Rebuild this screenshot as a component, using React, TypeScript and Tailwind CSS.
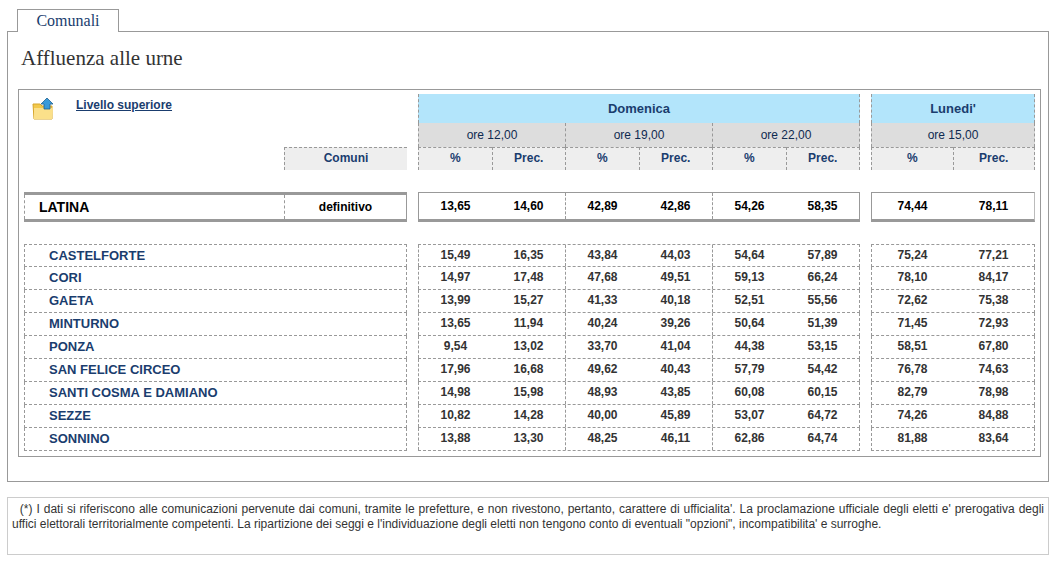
import React from "react";

const rows: [string, string[]][] = [
  ["CASTELFORTE", ["15,49", "16,35", "43,84", "44,03", "54,64", "57,89", "75,24", "77,21"]],
  ["CORI", ["14,97", "17,48", "47,68", "49,51", "59,13", "66,24", "78,10", "84,17"]],
  ["GAETA", ["13,99", "15,27", "41,33", "40,18", "52,51", "55,56", "72,62", "75,38"]],
  ["MINTURNO", ["13,65", "11,94", "40,24", "39,26", "50,64", "51,39", "71,45", "72,93"]],
  ["PONZA", ["9,54", "13,02", "33,70", "41,04", "44,38", "53,15", "58,51", "67,80"]],
  ["SAN FELICE CIRCEO", ["17,96", "16,68", "49,62", "40,43", "57,79", "54,42", "76,78", "74,63"]],
  ["SANTI COSMA E DAMIANO", ["14,98", "15,98", "48,93", "43,85", "60,08", "60,15", "82,79", "78,98"]],
  ["SEZZE", ["10,82", "14,28", "40,00", "45,89", "53,07", "64,72", "74,26", "84,88"]],
  ["SONNINO", ["13,88", "13,30", "48,25", "46,11", "62,86", "64,74", "81,88", "83,64"]],
];

const f = { fontFamily: '"Liberation Sans", Arial, sans-serif' };

export default function App() {
  return (
    <div className="w-[1056px] h-[563px] bg-white relative" style={f}>
      <div className="pt-[9px] pl-[17px]">
        <div className="w-[102px] h-[23px] border border-b-0 border-[#999] bg-white text-center text-[16px] text-[#1a3d6e] leading-[22px] relative z-10 -mb-px" style={{ fontFamily: '"Liberation Serif", serif' }}>
          Comunali
        </div>
      </div>
      <div className="mx-[7px] w-[1042px] h-[451px] border border-[#999] pt-[13px] px-[10px]">
        <div className="text-[21px] text-[#333] ml-[3px] leading-[26px]" style={{ fontFamily: '"Liberation Serif", serif' }}>
          Affluenza alle urne
        </div>
        <div className="mt-[18px] w-[1023px] h-[368px] border border-[#999] pl-[5px] pt-[4px] text-[12px] font-bold">
          <div className="flex">
            <div className="w-[383px] flex flex-col">
              <div className="flex items-start h-[53px]">
                <svg width="26" height="26" viewBox="0 0 26 26" className="ml-[7px] mt-[2px]">
                  <path d="M2 8h7l2 2h10v13H3z" fill="#f2c84b" stroke="#d6a52a" />
                  <path d="M3 12h19l-1 11H3z" fill="#fbe08a" />
                  <path d="M16 2l6 6h-3v5h-6V8h-3z" fill="#3a9ad9" stroke="#1e5f8e" strokeWidth="0.8" />
                </svg>
                <a className="ml-[19px] mt-[2px] text-[#1a3d6e] underline text-[12px]">Livello superiore</a>
              </div>
              <div className="flex h-[23px]">
                <div className="w-[260px]" />
                <div className="w-[123px] bg-[#eee] border-l border-t border-dashed border-[#999] text-center leading-[21px] text-[#1a3d6e]">Comuni</div>
              </div>
            </div>
            <div className="w-[11px]" />
            <div className="w-[442px] flex flex-col text-[#1a3d6e]">
              <div className="h-[29px] bg-[#b3e5fb] leading-[29px] text-center text-[13px] border-l border-r border-dashed border-[#999]">Domenica</div>
              <div className="h-[24px] bg-[#ddd] flex font-normal text-[12px] leading-[24px] text-[#0f2a50]">
                {["ore 12,00", "ore 19,00", "ore 22,00"].map((o, i) => (
                  <div key={o} className={"flex-1 text-center border-dashed border-[#999] border-l " + (i === 2 ? "border-r" : "")}>{o}</div>
                ))}
              </div>
              <div className="h-[23px] bg-[#eee] flex leading-[21px]">
                {[0, 1, 2, 3, 4, 5].map((i) => (
                  <div key={i} className={"flex-1 text-center border-dashed border-[#999] border-t border-l " + (i === 5 ? "border-r" : "")}>{i % 2 ? "Prec." : "%"}</div>
                ))}
              </div>
            </div>
            <div className="w-[11px]" />
            <div className="w-[164px] flex flex-col text-[#1a3d6e]">
              <div className="h-[29px] bg-[#b3e5fb] leading-[29px] text-center text-[13px] border-l border-r border-dashed border-[#999]">Lunedi'</div>
              <div className="h-[24px] bg-[#ddd] font-normal text-center leading-[24px] border-l border-r border-dashed border-[#999] text-[#0f2a50]">ore 15,00</div>
              <div className="h-[23px] bg-[#eee] flex leading-[21px]">
                <div className="flex-1 text-center border-dashed border-[#999] border-t border-l">%</div>
                <div className="flex-1 text-center border-dashed border-[#999] border-t border-l border-r">Prec.</div>
              </div>
            </div>
          </div>
          <div className="flex mt-[22px] h-[30px] text-black">
            <div className="w-[383px] flex border-y-[3px] border-[#999] border-r border-r-[#999]">
              <div className="w-[260px] border-l border-dashed border-[#999] pl-[14px] text-[14px] leading-[24px]">LATINA</div>
              <div className="w-[122px] border-l border-dashed border-[#999] text-center leading-[24px]">definitivo</div>
            </div>
            <div className="w-[11px]" />
            <div className="w-[442px] flex border-t border-b-[3px] border-[#999] border-l border-r leading-[27px] text-[12px]">
              {[0, 1, 2].map((g) => (
                <div key={g} className={"flex-1 flex " + (g > 0 ? "border-l border-dashed border-[#999]" : "")}>
                  <div className="flex-1 text-center">{["13,65", "42,89", "54,26"][g]}</div>
                  <div className="flex-1 text-center">{["14,60", "42,86", "58,35"][g]}</div>
                </div>
              ))}
            </div>
            <div className="w-[11px]" />
            <div className="w-[164px] flex border-t border-b-[3px] border-[#999] border-l border-r border-r-[#bbb] leading-[27px]">
              <div className="flex-1 text-center">74,44</div>
              <div className="flex-1 text-center">78,11</div>
            </div>
          </div>
          <div className="mt-[22px] text-[#333]">
            {rows.map(([n, v], ri) => (
              <div key={n} className="flex h-[23px] leading-[21px]">
                <div className={"w-[383px] border-l border-r border-b border-dashed border-[#999] pl-[24px] text-[#1a3d6e] text-[13px] " + (ri === 0 ? "border-t" : "")}>{n}</div>
                <div className="w-[11px]" />
                <div className={"w-[442px] flex border-b border-r border-dashed border-[#999] " + (ri === 0 ? "border-t" : "")}>
                  {[0, 1, 2].map((g) => (
                    <div key={g} className="flex-1 flex border-l border-dashed border-[#999]">
                      <div className="flex-1 text-center">{v[g * 2]}</div>
                      <div className="flex-1 text-center">{v[g * 2 + 1]}</div>
                    </div>
                  ))}
                </div>
                <div className="w-[11px]" />
                <div className={"w-[164px] flex border-b border-x border-dashed border-[#999] " + (ri === 0 ? "border-t" : "")}>
                  <div className="flex-1 text-center">{v[6]}</div>
                  <div className="flex-1 text-center">{v[7]}</div>
                </div>
              </div>
            ))}
          </div>
        </div>
      </div>
      <div className="mx-[7px] mt-[15px] w-[1042px] h-[58px] border border-[#ccc] px-[4px] pt-[4px] text-[12px] leading-[15px] text-[#333] text-justify font-['DejaVu_Sans',Verdana,sans-serif]">
        &nbsp;&nbsp;(*) I dati si riferiscono alle comunicazioni pervenute dai comuni, tramite le prefetture, e non rivestono, pertanto, carattere di ufficialita'. La proclamazione ufficiale degli eletti e' prerogativa degli uffici elettorali territorialmente competenti. La ripartizione dei seggi e l'individuazione degli eletti non tengono conto di eventuali "opzioni", incompatibilita' e surroghe.
      </div>
    </div>
  );
}
